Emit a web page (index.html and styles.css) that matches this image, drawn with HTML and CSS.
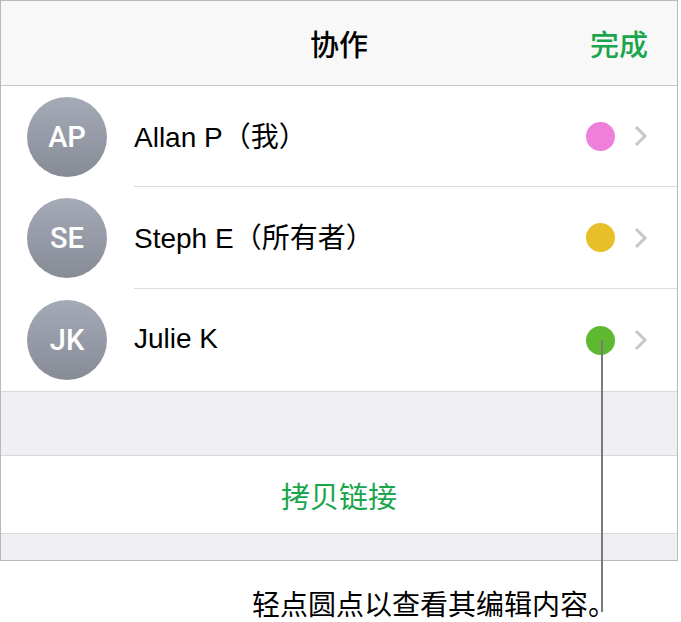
FILE: index.html
```html
<!DOCTYPE html>
<html lang="zh-CN">
<head>
    <meta charset="UTF-8">
    <title>协作</title>
    <link rel="stylesheet" href="styles.css">
</head>
<body>

<div class="page">
    <div class="panel">
        <div class="navbar">
            <span></span>
            <h1 class="title">协作</h1>
            <a class="done">完成</a>
        </div>

        <ul class="people">
            <li class="person">
                <div class="avatar">AP</div>
                <div class="person-body">
                    <span class="name">Allan P（我）</span>
                    <span class="dot pink"></span>
                    <svg class="chevron" viewBox="0 0 14 22" width="14" height="22"><path d="M2 2 L11 11 L2 20" /></svg>
                </div>
            </li>
            <li class="person">
                <div class="avatar">SE</div>
                <div class="person-body">
                    <span class="name">Steph E（所有者）</span>
                    <span class="dot yellow"></span>
                    <svg class="chevron" viewBox="0 0 14 22" width="14" height="22"><path d="M2 2 L11 11 L2 20" /></svg>
                </div>
            </li>
            <li class="person">
                <div class="avatar">JK</div>
                <div class="person-body">
                    <span class="name">Julie K</span>
                    <span class="dot green"></span>
                    <svg class="chevron" viewBox="0 0 14 22" width="14" height="22"><path d="M2 2 L11 11 L2 20" /></svg>
                </div>
            </li>
        </ul>

        <div class="spacer"></div>
        <div class="action">拷贝链接</div>
        <div class="spacer small"></div>
    </div>

    <div class="callout-line"></div>
    <p class="caption">轻点圆点以查看其编辑内容。</p>
</div>

</body>
</html>
```

FILE: styles.css
```css
body {
    margin: 0;
    background: #fff;
    font-family: "Liberation Sans", "Noto Sans CJK SC", sans-serif;
    color: #000;
}
.page {
    position: relative;
    width: 681px;
    height: 622px;
}
.panel {
    width: 678px;
    box-sizing: border-box;
    border: 1px solid #b9b9bb;
}
.navbar {
    height: 84px;
    background: #f8f8f9;
    border-bottom: 1px solid #c8c7cc;
    display: grid;
    grid-template-columns: 1fr auto 1fr;
    align-items: center;
}
.title {
    margin: 0;
    font-family: "Noto Sans CJK SC", sans-serif;
    font-size: 29px;
    font-weight: 500;
    text-align: center;
}
.done {
    justify-self: end;
    margin-right: 29px;
    font-family: "Noto Sans CJK SC", sans-serif;
    font-size: 29px;
    font-weight: 500;
    color: #1aa64d;
}
.people {
    list-style: none;
    margin: 0;
    padding: 0;
    border-bottom: 1px solid #d9d9dc;
}
.person {
    display: flex;
    align-items: center;
    height: 102px;
}
.person:first-child {
    height: 101px;
}
.avatar {
    flex: none;
    width: 80px;
    height: 80px;
    margin: 0 27px 0 26px;
    border-radius: 50%;
    background: linear-gradient(#a5aab7, #878b96);
    color: #fff;
    font-family: Roboto, sans-serif;
    font-size: 29px;
    font-weight: 500;
    display: flex;
    align-items: center;
    justify-content: center;
}
.person-body {
    flex: 1;
    align-self: stretch;
    display: flex;
    align-items: center;
    padding-right: 29px;
    border-bottom: 1px solid #dcdcdf;
}
.person:last-child .person-body {
    border-bottom: none;
}
.name {
    flex: 1;
    font-size: 28px;
    margin-top: -3px;
}
.dot {
    width: 29px;
    height: 29px;
    border-radius: 50%;
    margin-right: 19px;
}
.pink { background: #ee7fda; }
.yellow { background: #e7bf29; }
.green { background: #5eb930; }
.chevron {
    fill: none;
    stroke: #c7c7cc;
    stroke-width: 3;
}
.spacer {
    height: 63px;
    background: #efeff4;
    border-bottom: 1px solid #d9d9dc;
}
.spacer.small {
    height: 26px;
    border-bottom: none;
}
.action {
    height: 77px;
    border-bottom: 1px solid #d9d9dc;
    display: flex;
    align-items: center;
    justify-content: center;
    font-family: "Noto Sans CJK SC", sans-serif;
    font-size: 29px;
    color: #1aa64d;
}
.callout-line {
    position: absolute;
    left: 601px;
    top: 340px;
    width: 2px;
    height: 272px;
    background: #7a7a7a;
}
.caption {
    margin: 23px 0 0;
    padding-right: 65px;
    text-align: right;
    font-family: "Noto Sans CJK SC", sans-serif;
    font-size: 28px;
    line-height: 38px;
}
```
